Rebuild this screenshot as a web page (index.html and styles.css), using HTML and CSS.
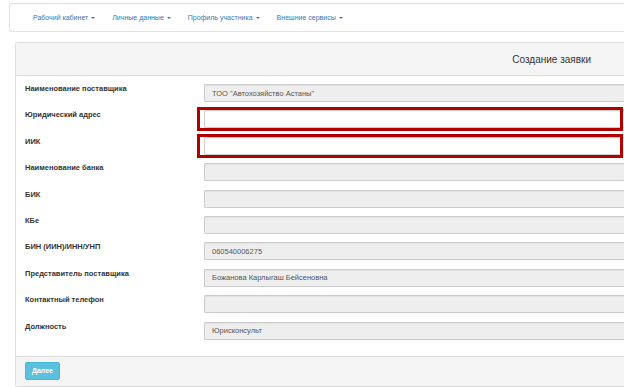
FILE: index.html
```html
<!DOCTYPE html>
<html lang="ru">
<head>
  <meta charset="UTF-8">
  <title>Создание заявки</title>
  <link rel="stylesheet" href="styles.css">
</head>
<body>
  <div class="topbar">
    <nav class="menu">
      <a class="menu-item" href="#">Рабочий кабинет <span class="caret"></span></a>
      <a class="menu-item" href="#">Личные данные <span class="caret"></span></a>
      <a class="menu-item" href="#">Профиль участника <span class="caret"></span></a>
      <a class="menu-item" href="#">Внешние сервисы <span class="caret"></span></a>
    </nav>
  </div>

  <div class="panel">
    <div class="panel-heading">Создание заявки</div>
    <div class="panel-body">
      <div class="form-row">
        <label>Наименование поставщика</label>
        <input class="field" type="text" value="ТОО &quot;Автохозяйство Астаны&quot;" readonly>
      </div>
      <div class="form-row">
        <label>Юридический адрес</label>
        <div class="marked"><input class="field editable" type="text"></div>
      </div>
      <div class="form-row">
        <label>ИИК</label>
        <div class="marked"><input class="field editable" type="text"></div>
      </div>
      <div class="form-row">
        <label>Наименование банка</label>
        <input class="field" type="text" readonly>
      </div>
      <div class="form-row">
        <label>БИК</label>
        <input class="field" type="text" readonly>
      </div>
      <div class="form-row">
        <label>КБе</label>
        <input class="field" type="text" readonly>
      </div>
      <div class="form-row">
        <label>БИН (ИИН)/ИНН/УНП</label>
        <input class="field" type="text" value="060540006275" readonly>
      </div>
      <div class="form-row">
        <label>Представитель поставщика</label>
        <input class="field" type="text" value="Божанова Карлыгаш Бейсеновна" readonly>
      </div>
      <div class="form-row">
        <label>Контактный телефон</label>
        <input class="field" type="text" readonly>
      </div>
      <div class="form-row">
        <label>Должность</label>
        <input class="field" type="text" value="Юрисконсульт" readonly>
      </div>
    </div>
    <div class="panel-footer">
      <button class="btn-next">Далее</button>
    </div>
  </div>
</body>
</html>
```

FILE: styles.css
```css
body {
  margin: 0;
  padding: 3px 0 0 9px;
  background: #ffffff;
  font-family: "Liberation Sans", Arial, sans-serif;
  color: #333;
}

.topbar {
  height: 27px;
  border: 1px solid #e3e3e3;
  border-right: none;
  border-radius: 3px 0 0 3px;
  background: #fff;
}

.menu {
  display: flex;
  align-items: center;
  height: 100%;
  padding-left: 23px;
  gap: 17px;
}

.menu-item {
  color: #3a76b0;
  font-size: 7px;
  text-decoration: none;
  display: flex;
  align-items: center;
  gap: 3px;
}

.caret {
  display: inline-block;
  width: 0;
  height: 0;
  border-top: 2px solid #3a76b0;
  border-left: 2px solid transparent;
  border-right: 2px solid transparent;
}

.panel {
  margin: 10px 0 0 6px;
  border: 1px solid #dddddd;
  border-right: none;
  border-radius: 3px 0 0 3px;
  background: #fff;
}

.panel-heading {
  display: flex;
  justify-content: flex-end;
  align-items: center;
  height: 32px;
  padding-right: 33px;
  background: #f5f5f5;
  border-bottom: 1px solid #dddddd;
  font-size: 10px;
  color: #333;
}

.panel-body {
  display: grid;
  row-gap: 8.4px;
  padding: 8px 0 16px 9px;
}

.form-row {
  display: grid;
  grid-template-columns: 179px 1fr;
  align-items: start;
}

.form-row label {
  font-size: 7.5px;
  font-weight: bold;
  color: #333;
  line-height: 10px;
}

.field {
  box-sizing: border-box;
  display: block;
  width: 100%;
  height: 18px;
  margin: 0;
  padding: 0 7px;
  border: 1px solid #cccccc;
  border-right: none;
  border-radius: 2px 0 0 2px;
  background: #eeeeee;
  font-family: "Liberation Sans", Arial, sans-serif;
  font-size: 7.5px;
  color: #555;
  box-shadow: inset 0 1px 1px rgba(0, 0, 0, 0.05);
}

.field.editable {
  background: #ffffff;
}

.marked {
  position: relative;
}

.marked::after {
  content: "";
  position: absolute;
  left: -7px;
  top: -3px;
  bottom: -3px;
  right: 1px;
  border: 3px solid #b00000;
  pointer-events: none;
}

.panel-footer {
  background: #f5f5f5;
  border-top: 1px solid #dddddd;
  padding: 5px 9px 6px;
}

.btn-next {
  display: block;
  width: 35px;
  height: 18px;
  padding: 0;
  border: 1px solid #46b8da;
  border-radius: 2px;
  background: #5bc0de;
  color: #fff;
  font-family: "Liberation Sans", Arial, sans-serif;
  font-size: 7px;
  font-weight: bold;
}
```
